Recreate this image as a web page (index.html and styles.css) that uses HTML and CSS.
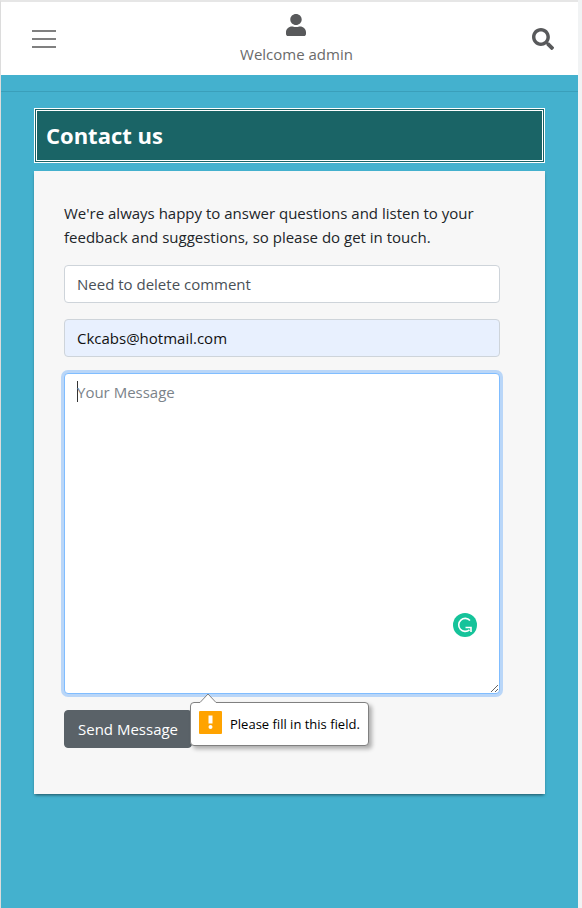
FILE: index.html
```html
<!DOCTYPE html>
<html lang="en">
<head>
<meta charset="utf-8">
<meta name="viewport" content="width=device-width, initial-scale=1">
<title>Contact us</title>
<link rel="stylesheet" href="styles.css">
</head>
<body>
<header class="topbar">
  <button class="icon-button" type="button" aria-label="Menu">
    <svg width="30" height="30" viewBox="0 0 30 30" fill="none" stroke="#808080" stroke-width="2" stroke-linecap="butt"><path d="M3 6h24M3 14h24M3 22h24"/></svg>
  </button>
  <a class="account" href="#">
    <svg width="20" height="22" viewBox="0 0 448 512" preserveAspectRatio="none" fill="#58595b"><path d="M224 256c70.700 0 128-57.300 128-128S294.700 0 224 0 96 57.300 96 128s57.300 128 128 128zm89.600 32h-16.700c-22.200 10.200-46.900 16-72.900 16s-50.600-5.800-72.900-16h-16.700C60.200 288 0 348.200 0 422.400V464c0 26.500 21.500 48 48 48h352c26.500 0 48-21.500 48-48v-41.600c0-74.200-60.200-134.400-134.400-134.400z"/></svg>
    <span>Welcome admin</span>
  </a>
  <button class="icon-button" type="button" aria-label="Search">
    <svg width="22" height="24" viewBox="0 0 22 24" fill="#58595b"><path transform="scale(.043)" d="M505 442.700L405.300 343c-4.500-4.500-10.600-7-17-7H372c27.600-35.300 44-79.700 44-128C416 93.100 322.900 0 208 0S0 93.100 0 208s93.100 208 208 208c48.300 0 92.700-16.400 128-44v16.300c0 6.400 2.500 12.500 7 17l99.700 99.700c9.400 9.400 24.600 9.400 33.900 0l28.300-28.300c9.400-9.400 9.400-24.600.1-34zM208 336c-70.700 0-128-57.200-128-128 0-70.700 57.200-128 128-128 70.700 0 128 57.200 128 128 0 70.700-57.200 128-128 128z"/></svg>
  </button>
</header>
<hr class="divider">
<main class="content">
  <h1 class="title">Contact us</h1>
  <section class="card">
    <p class="intro">We're always happy to answer questions and listen to your feedback and suggestions, so please do get in touch.</p>
    <form class="form">
      <input class="field" type="text" aria-label="Subject" value="Need to delete comment">
      <input class="field filled" type="email" aria-label="Email" value="Ckcabs@hotmail.com">
      <div class="message-wrap">
        <textarea class="field message" aria-label="Your Message" placeholder="Your Message" required></textarea>
        <svg class="checker" width="24" height="24" viewBox="0 0 24 24" fill="none"><circle cx="12" cy="12" r="12" fill="#15c39a"/><path d="M17 7.500A6.500 6.500 0 1 0 16.500 16.800" stroke="#fff" stroke-width="1.600"/><path d="M12.500 14.500H18V19" stroke="#fff" stroke-width="1.600"/></svg>
      </div>
      <div class="actions">
        <button class="send" type="button">Send Message</button>
        <div class="hint" role="alert">
          <svg class="pointer" width="18" height="10" viewBox="0 0 18 10"><path d="M0 10L9 1l9 9z" fill="#fff"/><path d="M0 9.500h1L9 1l8 8.500h1" fill="none" stroke="#808080"/></svg>
          <svg width="23" height="23" viewBox="0 0 23 23"><rect width="23" height="23" rx="1" fill="#ffa300"/><path d="M9.500 4.500h4v8h-4z" fill="#fff"/><circle cx="11.500" cy="16" r="2" fill="#fff"/></svg>
          <span>Please fill in this field.</span>
        </div>
      </div>
    </form>
  </section>
</main>
</body>
</html>
```
FILE: styles.css
```css
* {
  box-sizing: border-box;
}

html {
  background: #f1f3f4;
}

body {
  margin: 0 4px 0 0;
  min-height: 100vh;
  border-top: 2px solid #e6e6e6;
  border-left: 1px solid #dcdcdc;
  background: #44b1ce;
  color: #212529;
  font-family: "Segoe UI", "Open Sans", "Noto Sans", sans-serif;
  font-size: 15px;
  line-height: 24px;
}

svg {
  display: block;
}

.topbar {
  display: grid;
  grid-template-columns: 1fr auto 1fr;
  align-items: center;
  height: 73px;
  padding: 2px 24px 0 28px;
  background: #fff;
}

.icon-button {
  justify-self: start;
  padding: 0;
  border: 0;
  background: none;
}

.icon-button:last-child {
  justify-self: end;
}

.account {
  display: flex;
  flex-direction: column;
  align-items: center;
  gap: 6px;
  padding-left: 12px;
  padding-right: 2px;
  color: #6a6a6a;
  text-decoration: none;
}

.divider {
  height: 1px;
  margin: 16px 0;
  border: 0;
  background: #3a9fba;
}

.content {
  padding: 0 33px;
}

.title {
  margin: 0 0 8px;
  padding: 10px 9px;
  border: 3px double #fff;
  background: #1a6466;
  color: #fff;
  font-size: 22px;
  font-weight: 700;
  line-height: 29px;
}

.card {
  padding: 30px 45px 46px 30px;
  background: #f7f7f7;
  box-shadow: 0 2px 3px -1px rgba(0, 0, 0, 0.55);
}

.intro {
  margin: 0 0 16px;
}

.form {
  display: flex;
  flex-direction: column;
  gap: 16px;
}

.field {
  display: block;
  width: 100%;
  height: 38px;
  padding: 6px 12px;
  border: 1px solid #ced4da;
  border-radius: 4px;
  background: #fff;
  color: #495057;
  font: inherit;
}

.field::placeholder {
  color: #7b838a;
  opacity: 1;
}

.filled {
  background: #e8f0fe;
  color: #111;
}

.message-wrap {
  position: relative;
}

.message {
  height: 321px;
  border-color: #80bdff;
  outline: 0;
  background: linear-gradient(#333, #333) 12px 7px / 1px 21px no-repeat #fff;
  box-shadow: 0 0 0 3px #b9d6f8;
}

.checker {
  position: absolute;
  right: 23px;
  bottom: 57px;
}

.actions {
  position: relative;
  display: flex;
}

.send {
  padding: 6px 13px;
  border: 1px solid #5a6268;
  border-radius: 4px;
  background: #5a6268;
  color: #fff;
  font: inherit;
}

.hint {
  position: absolute;
  top: -8px;
  left: 126px;
  display: flex;
  align-items: center;
  gap: 8px;
  height: 44px;
  padding: 0 8px;
  border: 1px solid #808080;
  border-radius: 4px;
  background: #fff;
  box-shadow: 3px 3px 4px rgba(0, 0, 0, 0.3);
  color: #000;
  font-size: 13px;
  white-space: nowrap;
}

.hint > svg:not(.pointer) {
  margin-bottom: 4px;
}

.pointer {
  position: absolute;
  top: -10px;
  left: 8px;
}
```
